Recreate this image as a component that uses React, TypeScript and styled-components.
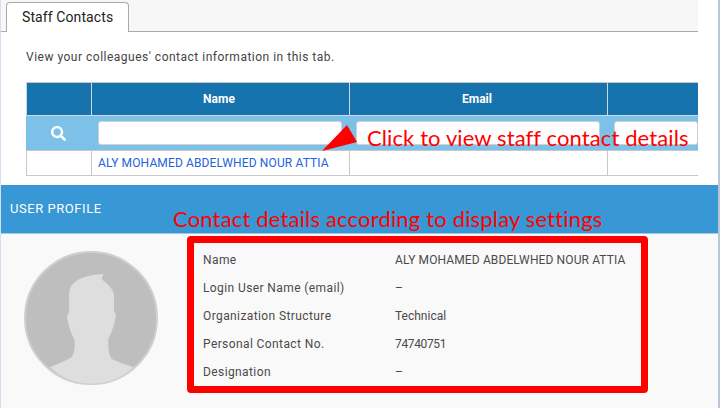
import React from "react";
import styled, { createGlobalStyle } from "styled-components";
import { FaSearch } from "react-icons/fa";

const Global = createGlobalStyle`
  html, body { margin: 0; padding: 0; background: #fff; }
  * { box-sizing: border-box; }
`;

const Page = styled.div`
  position: relative;
  width: 720px;
  height: 408px;
  overflow: hidden;
  background: #fff;
  font-family: Roboto, "Noto Sans", sans-serif;
  font-size: 12px;
  border-left: 1px solid #d5e0f0;
  border-right: 2px solid #b9c5d9;
`;

const ScrollMark = styled.div`
  position: absolute;
  right: -2px;
  top: 206px;
  width: 2px;
  height: 5px;
  background: #444;
`;

const TopPanel = styled.section`
  width: 697px;
  height: 185px;
`;

const TabBar = styled.div`
  height: 32px;
  padding: 2px 0 0 5px;
  background: #f7f7f7;
  border-bottom: 1px solid #aaa;
`;

const Tab = styled.div`
  width: 123px;
  height: 30px;
  padding-left: 15px;
  line-height: 28px;
  font-size: 14px;
  letter-spacing: 0.1px;
  color: #222;
  background: #fff;
  border: 1px solid #aaa;
  border-bottom: none;
  border-radius: 4px 4px 0 0;
`;

const Intro = styled.p`
  margin: 0;
  padding: 17px 0 0 25px;
  height: 50px;
  line-height: 16px;
  font-size: 12px;
  letter-spacing: 0.5px;
  color: #444;
`;

const Table = styled.div`
  margin-left: 25px;
  width: 672px;
  display: grid;
  grid-template-columns: 65px 258px 258px 91px;
  grid-template-rows: 33px 35px 25px;
  border-top: 1px solid #c8c8c8;
`;

const HeadCell = styled.div`
  display: flex;
  align-items: center;
  justify-content: center;
  padding: 0 3px 1px 0;
  background: #1673ad;
  color: #fff;
  font-weight: 700;
  font-size: 12px;
  border-left: 1px solid #c8d8e4;
  border-bottom: 1px solid #c8d8e4;
`;

const FilterCell = styled.div<{ $flush?: boolean }>`
  display: flex;
  align-items: center;
  justify-content: center;
  padding: 0 ${(p) => (p.$flush ? 0 : 7)}px 0 7px;
  background: #7dc0e8;
  color: #fff;
  border-bottom: 1px solid #c8c8c8;
`;

const FilterInput = styled.input`
  display: block;
  width: 100%;
  height: 24px;
  background: #fff;
  border: 1px solid #d0d0d0;
  border-radius: 3px;
`;

const DataCell = styled.div`
  display: flex;
  align-items: center;
  padding-left: 6px;
  font-size: 12px;
  letter-spacing: 0.13px;
  color: #2463d8;
  border-left: 1px solid #c8c8c8;
  border-bottom: 1px solid #c8c8c8;
`;

const ProfileBar = styled.header`
  height: 49px;
  padding: 0 0 2px 9px;
  display: flex;
  align-items: center;
  background: #3798d5;
  color: #fff;
  font-size: 13px;
  letter-spacing: 0.55px;
  border-bottom: 1px solid #a8c8e0;
`;

const ProfileBody = styled.section`
  height: 174px;
  display: flex;
  align-items: flex-start;
  padding: 2px 0 0 23px;
  background: #f9f9f9;
`;

const AvatarArt = styled.svg`
  display: block;
  flex: none;
  width: 134px;
  height: 134px;
  margin-top: 15px;
`;

const Details = styled.dl`
  margin: 0 0 0 29px;
  width: 461px;
  height: 157px;
  padding: 3px 0 0 9px;
  border: 7px solid #ff0000;
  border-radius: 4px;
  display: grid;
  grid-template-columns: 192px 1fr;
  grid-auto-rows: 28px;
  align-items: center;
  font-size: 12px;
  color: #4a4a4a;
`;

const Term = styled.dt`
  letter-spacing: 0.4px;
`;

const Value = styled.dd<{ $spacing?: number }>`
  margin: 0;
  letter-spacing: ${(p) => p.$spacing ?? 0}px;
`;

const Note = styled.div<{ $x: number; $y: number; $spacing: number }>`
  position: absolute;
  left: ${(p) => p.$x}px;
  top: ${(p) => p.$y}px;
  font-family: Lato, "Open Sans", sans-serif;
  font-size: 22px;
  font-weight: 400;
  line-height: 26px;
  letter-spacing: ${(p) => p.$spacing}px;
  white-space: nowrap;
  color: #ff0000;
`;

const Pointer = styled.svg`
  position: absolute;
  left: 320px;
  top: 124px;
  width: 38px;
  height: 28px;
`;

const cols = ["", "Name", "Email", ""];

export default function App() {
  return (
    <Page>
      <Global />
      <TopPanel>
        <TabBar>
          <Tab>Staff Contacts</Tab>
        </TabBar>
        <Intro>View your colleagues' contact information in this tab.</Intro>
        <Table>
          {cols.map((c, i) => (
            <HeadCell key={i}>{c}</HeadCell>
          ))}
          <FilterCell>
            <FaSearch size={15} />
          </FilterCell>
          <FilterCell>
            <FilterInput />
          </FilterCell>
          <FilterCell>
            <FilterInput />
          </FilterCell>
          <FilterCell $flush>
            <FilterInput />
          </FilterCell>
          <DataCell />
          <DataCell>ALY MOHAMED ABDELWHED NOUR ATTIA</DataCell>
          <DataCell />
          <DataCell />
        </Table>
      </TopPanel>
      <ProfileBar>USER PROFILE</ProfileBar>
      <ProfileBody>
        <AvatarArt viewBox="72 141 402 402">
          <circle cx="273" cy="342" r="198" fill="#bebebe" stroke="#cfcfcf" strokeWidth="6" />
          <path
            d="M310 210 C280 212 250 216 228 232 C212 244 207 256 207 275 L207 325 L201 335 C203 355 208 375 222 405 C226 420 226 440 215 460 C195 472 170 482 150 490 C185 525 230 539 273 539 C320 539 365 525 400 490 C380 482 355 475 335 465 C326 450 323 425 325 405 C335 385 345 360 348 333 L342 322 L342 272 C340 255 322 240 305 225 Z"
            fill="#dedede"
          />
        </AvatarArt>
        <Details>
          <Term>Name</Term>
          <Value $spacing={0.12}>ALY MOHAMED ABDELWHED NOUR ATTIA</Value>
          <Term>Login User Name (email)</Term>
          <Value>–</Value>
          <Term>Organization Structure</Term>
          <Value>Technical</Value>
          <Term>Personal Contact No.</Term>
          <Value $spacing={-0.35}>74740751</Value>
          <Term>Designation</Term>
          <Value>–</Value>
        </Details>
      </ProfileBody>
      <Pointer viewBox="320 124 38 28">
        <polygon points="346,125 356,142 321,151" fill="#ff0000" />
      </Pointer>
      <Note $x={366} $y={125} $spacing={0.11}>Click to view staff contact details</Note>
      <Note $x={172} $y={206} $spacing={0.17}>Contact details according to display settings</Note>
      <ScrollMark />
    </Page>
  );
}
